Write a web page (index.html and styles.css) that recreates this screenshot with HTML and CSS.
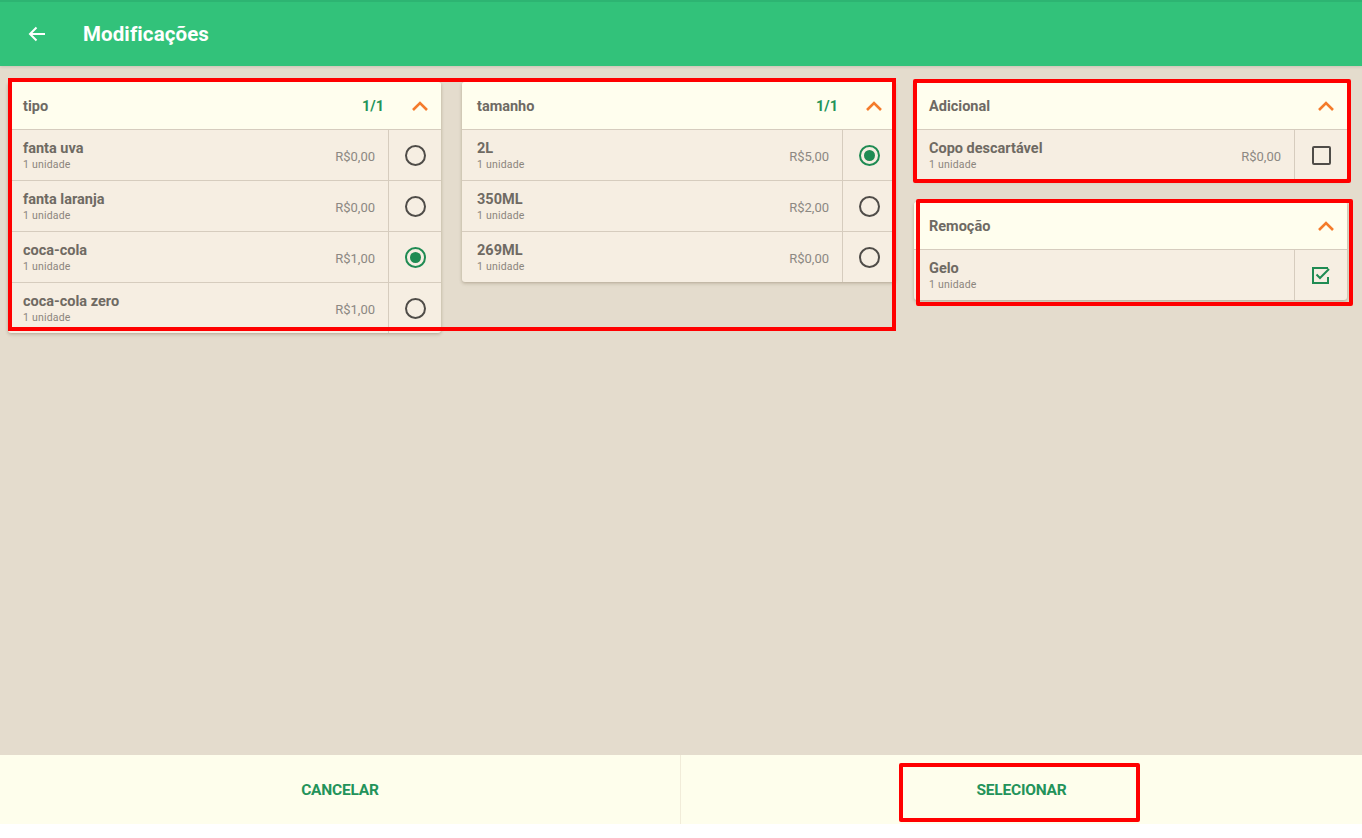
FILE: index.html
```html
<!DOCTYPE html>
<html lang="pt-BR">
<head>
<meta charset="utf-8">
<title>Modificações</title>
<link rel="stylesheet" href="styles.css">
</head>
<body>
<div class="app">
  <header class="topbar">
    <button class="back" aria-label="Voltar">
      <svg width="20" height="20" viewBox="0 0 20 20"><path d="M18 10H3M9.5 3.5L3 10l6.5 6.5" fill="none" stroke="#fff" stroke-width="2"/></svg>
    </button>
    <h1 class="title">Modificações</h1>
  </header>

  <main class="content">
    <div class="mark mark-groups"></div>
    <section class="col">
      <div class="card">
        <div class="card-head">
          <span class="card-title">tipo</span>
          <span class="count">1/1</span>
          <svg class="chev" width="18" height="12" viewBox="0 0 18 12"><path d="M2 10l7-7 7 7" fill="none" stroke="#f47b2b" stroke-width="2.6"/></svg>
        </div>
        <div class="row">
          <div class="info"><div class="name">fanta uva</div><div class="unit">1 unidade</div></div>
          <div class="price">R$0,00</div>
          <div class="ctl"><span class="radio"></span></div>
        </div>
        <div class="row">
          <div class="info"><div class="name">fanta laranja</div><div class="unit">1 unidade</div></div>
          <div class="price">R$0,00</div>
          <div class="ctl"><span class="radio"></span></div>
        </div>
        <div class="row">
          <div class="info"><div class="name">coca-cola</div><div class="unit">1 unidade</div></div>
          <div class="price">R$1,00</div>
          <div class="ctl"><span class="radio on"></span></div>
        </div>
        <div class="row">
          <div class="info"><div class="name">coca-cola zero</div><div class="unit">1 unidade</div></div>
          <div class="price">R$1,00</div>
          <div class="ctl"><span class="radio"></span></div>
        </div>
      </div>
    </section>

    <section class="col">
      <div class="card">
        <div class="card-head">
          <span class="card-title">tamanho</span>
          <span class="count">1/1</span>
          <svg class="chev" width="18" height="12" viewBox="0 0 18 12"><path d="M2 10l7-7 7 7" fill="none" stroke="#f47b2b" stroke-width="2.6"/></svg>
        </div>
        <div class="row">
          <div class="info"><div class="name">2L</div><div class="unit">1 unidade</div></div>
          <div class="price">R$5,00</div>
          <div class="ctl"><span class="radio on"></span></div>
        </div>
        <div class="row">
          <div class="info"><div class="name">350ML</div><div class="unit">1 unidade</div></div>
          <div class="price">R$2,00</div>
          <div class="ctl"><span class="radio"></span></div>
        </div>
        <div class="row">
          <div class="info"><div class="name">269ML</div><div class="unit">1 unidade</div></div>
          <div class="price">R$0,00</div>
          <div class="ctl"><span class="radio"></span></div>
        </div>
      </div>
    </section>

    <section class="col col-stack">
      <div class="card">
        <div class="mark mark-add"></div>
        <div class="card-head">
          <span class="card-title">Adicional</span>
          <svg class="chev" width="18" height="12" viewBox="0 0 18 12"><path d="M2 10l7-7 7 7" fill="none" stroke="#f47b2b" stroke-width="2.6"/></svg>
        </div>
        <div class="row">
          <div class="info"><div class="name">Copo descartável</div><div class="unit">1 unidade</div></div>
          <div class="price">R$0,00</div>
          <div class="ctl"><span class="check"></span></div>
        </div>
      </div>
      <div class="card">
        <div class="mark mark-rem"></div>
        <div class="card-head">
          <span class="card-title">Remoção</span>
          <svg class="chev" width="18" height="12" viewBox="0 0 18 12"><path d="M2 10l7-7 7 7" fill="none" stroke="#f47b2b" stroke-width="2.6"/></svg>
        </div>
        <div class="row">
          <div class="info"><div class="name">Gelo</div><div class="unit">1 unidade</div></div>
          <div class="price"></div>
          <div class="ctl">
            <svg width="20" height="20" viewBox="0 0 20 20"><path d="M17 3H2v15h15v-6" fill="none" stroke="#1f8b53" stroke-width="2"/><path d="M5.5 9.5l3.5 3.5 9-9" fill="none" stroke="#1f8b53" stroke-width="2"/></svg>
          </div>
        </div>
      </div>
    </section>
  </main>

  <footer class="actions">
    <button class="action action-cancel">CANCELAR</button>
    <button class="action action-main">SELECIONAR<span class="mark mark-btn"></span></button>
  </footer>
</div>
</body>
</html>
```

FILE: styles.css
```css
* { box-sizing: border-box; }

html, body {
  margin: 0;
  padding: 0;
  width: 1362px;
  height: 838px;
  background: #ffffff;
  font-family: Roboto, "Liberation Sans", Arial, sans-serif;
  overflow: hidden;
}

.app {
  display: flex;
  flex-direction: column;
  height: 824px;
  background: #e4dccd;
}

/* top app bar */
.topbar {
  height: 66px;
  flex: none;
  display: flex;
  align-items: center;
  background: #32c27a;
  border-top: 2px solid #2db472;
  box-shadow: 0 1px 3px rgba(0,0,0,0.12);
}

.back {
  width: 20px;
  height: 20px;
  margin-left: 27px;
  padding: 0;
  border: 0;
  background: none;
  display: flex;
}

.title {
  margin: 0 0 0 36px;
  color: #ffffff;
  font-size: 20.5px;
  font-weight: 700;
  letter-spacing: 0.1px;
}

/* option groups */
.content {
  position: relative;
  flex: 1;
  display: grid;
  grid-template-columns: repeat(3, 433px);
  column-gap: 21px;
  align-items: start;
  padding: 16px 0 0 8px;
}

.col-stack {
  display: flex;
  flex-direction: column;
  gap: 22px;
  width: 433px;
  margin-left: -2px;
}

.card {
  position: relative;
  background: #f6eee2;
  border-radius: 3px;
  box-shadow: 0 1px 3px rgba(80,60,30,0.25), 0 2px 4px rgba(80,60,30,0.08);
}

.card-head {
  height: 48px;
  display: flex;
  align-items: center;
  padding: 1px 12px 0 15px;
  background: #fffeee;
  border-bottom: 1px solid #d6ccbe;
  border-radius: 3px 3px 0 0;
}

.card-title {
  flex: 1;
  font-size: 14.5px;
  font-weight: 700;
  color: #6e6a64;
}

.count {
  font-size: 14.5px;
  font-weight: 700;
  color: #23935a;
  margin-right: 27px;
}

.chev { display: block; }

.row {
  height: 51px;
  display: flex;
  align-items: stretch;
  border-bottom: 1px solid #d6ccbe;
}

.row:last-child { border-bottom: 0; height: 50px; }

.info {
  flex: 1;
  padding: 10px 0 0 15px;
}

.name {
  font-size: 14.5px;
  font-weight: 700;
  color: #6f6a63;
  line-height: 17px;
}

.unit {
  font-size: 10.5px;
  color: #8b857d;
  line-height: 14px;
  margin-top: 1px;
  letter-spacing: 0.2px;
}

.price {
  align-self: center;
  font-size: 13px;
  color: #8c8882;
  padding-right: 13px;
  padding-top: 2px;
}

.ctl {
  width: 53px;
  flex: none;
  display: flex;
  align-items: center;
  justify-content: center;
  border-left: 1px solid #d6ccbe;
}

.radio {
  width: 21px;
  height: 21px;
  border: 2px solid #4f4c48;
  border-radius: 50%;
  display: flex;
  align-items: center;
  justify-content: center;
}

.radio.on { border-color: #1f8b53; }
.radio.on::after {
  content: "";
  width: 11px;
  height: 11px;
  border-radius: 50%;
  background: #1f8b53;
}

.check {
  width: 19px;
  height: 19px;
  border: 2px solid #4f4c48;
  border-radius: 2px;
}

/* bottom actions */
.actions {
  height: 69px;
  flex: none;
  display: flex;
  background: #fefeec;
}

.action {
  position: relative;
  border: 0;
  background: none;
  font-family: Roboto, "Liberation Sans", sans-serif;
  font-size: 15.5px;
  font-weight: 700;
  color: #23935a;
  letter-spacing: -0.2px;
  padding: 0;
}

.action-cancel { width: 680px; flex: none; }
.action-main { flex: 1; border-left: 1px solid #f1ecd9; }

/* red highlight frames */
.mark {
  position: absolute;
  border: 4px solid #ff0000;
  pointer-events: none;
  z-index: 5;
}

.mark-groups {
  left: 8px;
  top: 12px;
  width: 888px;
  height: 253px;
}

.mark-add {
  left: -1px;
  top: -3px;
  width: 438px;
  height: 104px;
  border-radius: 2px;
}

.mark-rem {
  left: 2px;
  top: -3px;
  width: 437px;
  height: 107px;
  border-radius: 2px;
}

.mark-btn {
  left: 218px;
  top: 8px;
  width: 241px;
  height: 59px;
  border-radius: 2px;
}
```
